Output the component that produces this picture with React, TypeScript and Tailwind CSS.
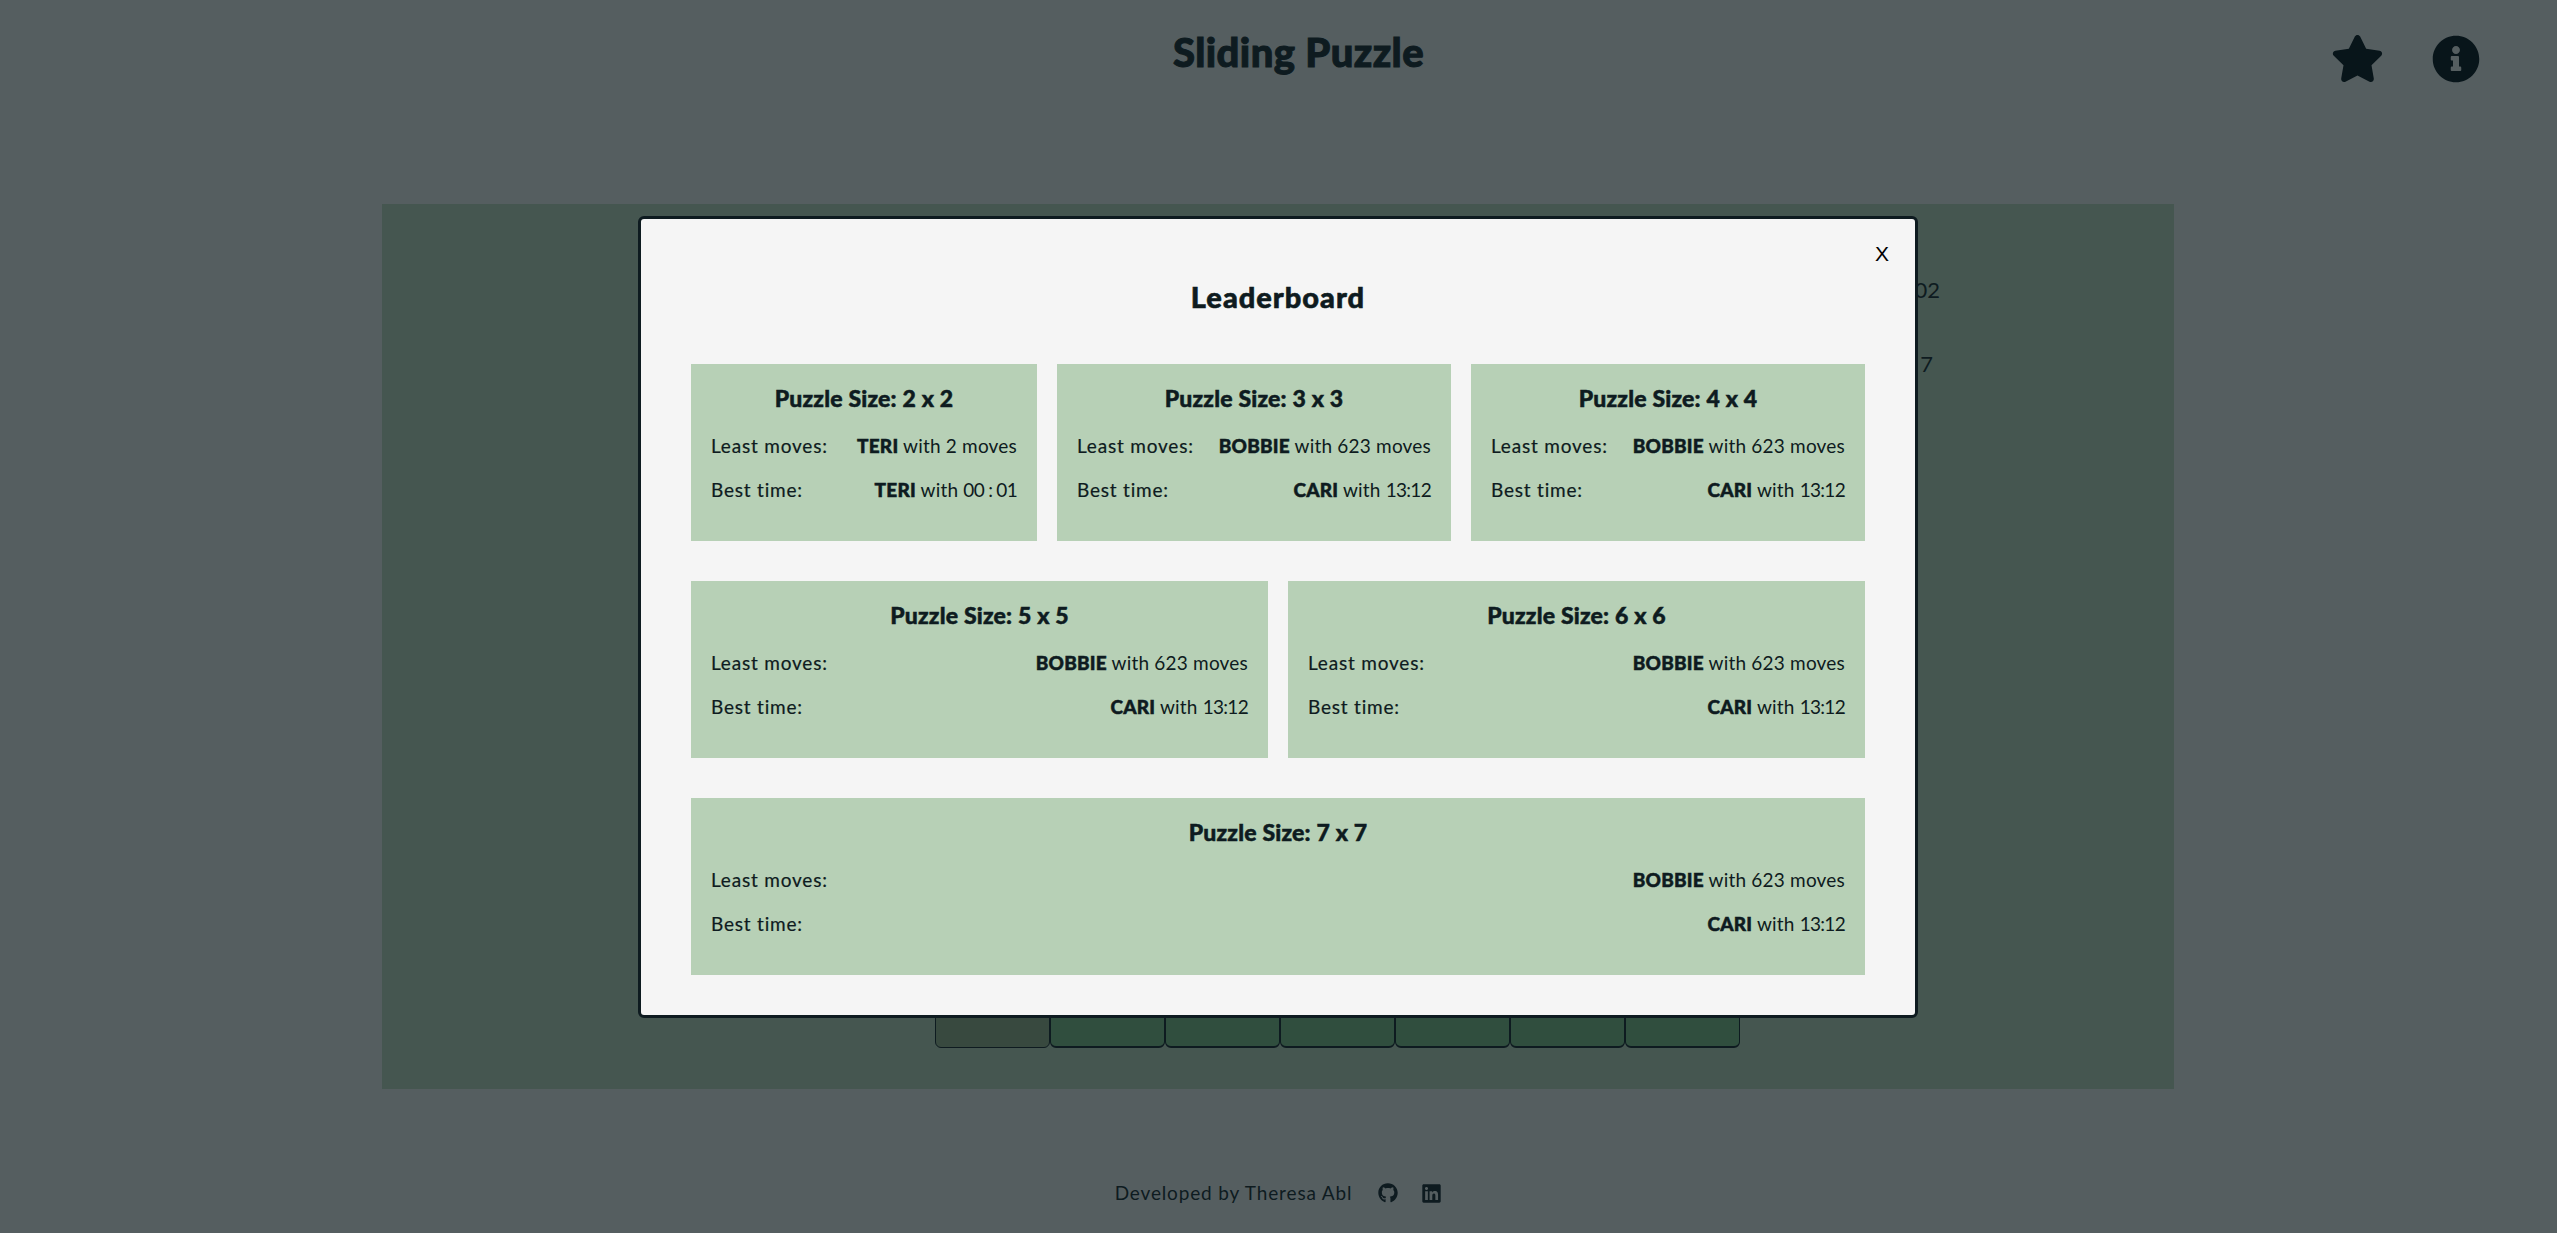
import { FaGithub, FaInfoCircle, FaLinkedin, FaStar } from 'react-icons/fa';

type Score = {
  size: number;
  moves: string;
  movesBy: string;
  time: string;
  timeBy: string;
  width: string;
};

const rows: Score[][] = [
  [
    { size: 2, movesBy: 'TERI', moves: '2 moves', timeBy: 'TERI', time: '00 : 01', width: 'w-[346px]' },
    { size: 3, movesBy: 'BOBBIE', moves: '623 moves', timeBy: 'CARI', time: '13:12', width: 'flex-1' },
    { size: 4, movesBy: 'BOBBIE', moves: '623 moves', timeBy: 'CARI', time: '13:12', width: 'flex-1' },
  ],
  [
    { size: 5, movesBy: 'BOBBIE', moves: '623 moves', timeBy: 'CARI', time: '13:12', width: 'flex-1' },
    { size: 6, movesBy: 'BOBBIE', moves: '623 moves', timeBy: 'CARI', time: '13:12', width: 'flex-1' },
  ],
  [{ size: 7, movesBy: 'BOBBIE', moves: '623 moves', timeBy: 'CARI', time: '13:12', width: 'flex-1' }],
];

const cells = Array.from({ length: 49 }, (_, i) => i);

function ScoreCard({ score }: { score: Score }) {
  return (
    <div className={`${score.width} h-[176.7px] bg-[#b7d0b6] px-5 pt-[19px]`}>
      <h3 className="mb-[20px] text-center text-[23px] leading-[30px] font-black tracking-[0.2px] [-webkit-text-stroke:0.5px_#0e1b20]">
        Puzzle Size: {score.size} x {score.size}
      </h3>
      <div className="flex h-[44px] items-start justify-between text-[19px] leading-[26px]">
        <span className="tracking-[0.8px] [-webkit-text-stroke:0.2px_#0e1b20]">Least moves:</span>
        <span className="tracking-[0.2px]">
          <b className="font-black [-webkit-text-stroke:0.5px_#0e1b20]">{score.movesBy}</b> with {score.moves}
        </span>
      </div>
      <div className="flex items-start justify-between text-[19px] leading-[26px]">
        <span className="tracking-[0.8px] [-webkit-text-stroke:0.2px_#0e1b20]">Best time:</span>
        <span className="tracking-[0.2px]">
          <b className="font-black [-webkit-text-stroke:0.5px_#0e1b20]">{score.timeBy}</b> with{' '}
          <span className="tracking-[-0.7px]">{score.time}</span>
        </span>
      </div>
    </div>
  );
}

export default function App() {
  return (
    <div className="flex h-screen flex-col overflow-hidden bg-[#555e60] font-['Lato',sans-serif] text-[#0e1b20]">
      <header className="flex h-[204px] shrink-0 items-start">
        <div className="flex-1" />
        <h1 className="ml-[40px] pt-[28px] text-[40px] leading-[48px] font-black tracking-[0.4px] [-webkit-text-stroke:1px_#0e1b20]">
          Sliding Puzzle
        </h1>
        <div className="flex flex-1 justify-end">
          <div className="flex items-center gap-[48px] pt-[32px] pr-[77px] text-[#08151a]">
            <FaStar className="text-[53px]" />
            <FaInfoCircle className="text-[48px]" />
          </div>
        </div>
      </header>

      <main className="ml-[382px] flex h-[885px] w-[1792px] shrink-0 justify-center gap-[30px] bg-[#455650] pt-[39px]">
        <div className="w-[289px]" />
        <div className="grid h-[805px] w-[805px] grid-cols-7 grid-rows-7">
          {cells.map((cell) => (
            <div
              key={cell}
              className={`rounded-[6px] border border-[#0e1b20] ${cell === 42 ? 'bg-[#38493f]' : 'border-b-2 bg-[#304e3e]'}`}
            />
          ))}
        </div>
        <div className="flex w-[170px] flex-col items-end pt-[33px] text-[22px] leading-[28px] text-[#0e1b20]">
          <p className="mb-[46px]">Time: 00 : 02</p>
          <p className="mr-[7px]">Moves: 7</p>
        </div>
      </main>

      <footer className="flex flex-1 items-start justify-center pt-[91px] text-[#0e1b20]">
        <span className="text-[19px] leading-[26px] tracking-[0.85px]">Developed by Theresa Abl</span>
        <a className="ml-[26px] pt-[3px] text-[20px]">
          <FaGithub />
        </a>
        <a className="ml-[23px] pt-[3px] text-[21px]">
          <FaLinkedin />
        </a>
      </footer>

      <div className="fixed inset-0 flex items-center justify-center">
        <div className="relative mr-[1px] h-[802px] w-[1280px] rounded-[6px] border-[3px] border-[#0e1b20] bg-[#f5f5f5] px-[50px]">
          <button className="absolute top-[23px] right-[26px] font-['Liberation_Sans',sans-serif] text-[21px] leading-[24px] text-black">
            X
          </button>
          <h2 className="pt-[60px] pb-[49.5px] text-center text-[29px] leading-[36px] font-black tracking-[1px] [-webkit-text-stroke:0.6px_#0e1b20]">
            Leaderboard
          </h2>
          <div className="flex flex-col gap-[40.4px]">
            {rows.map((row) => (
              <div key={row[0].size} className="flex gap-5">
                {row.map((score) => (
                  <ScoreCard key={score.size} score={score} />
                ))}
              </div>
            ))}
          </div>
        </div>
      </div>
    </div>
  );
}
